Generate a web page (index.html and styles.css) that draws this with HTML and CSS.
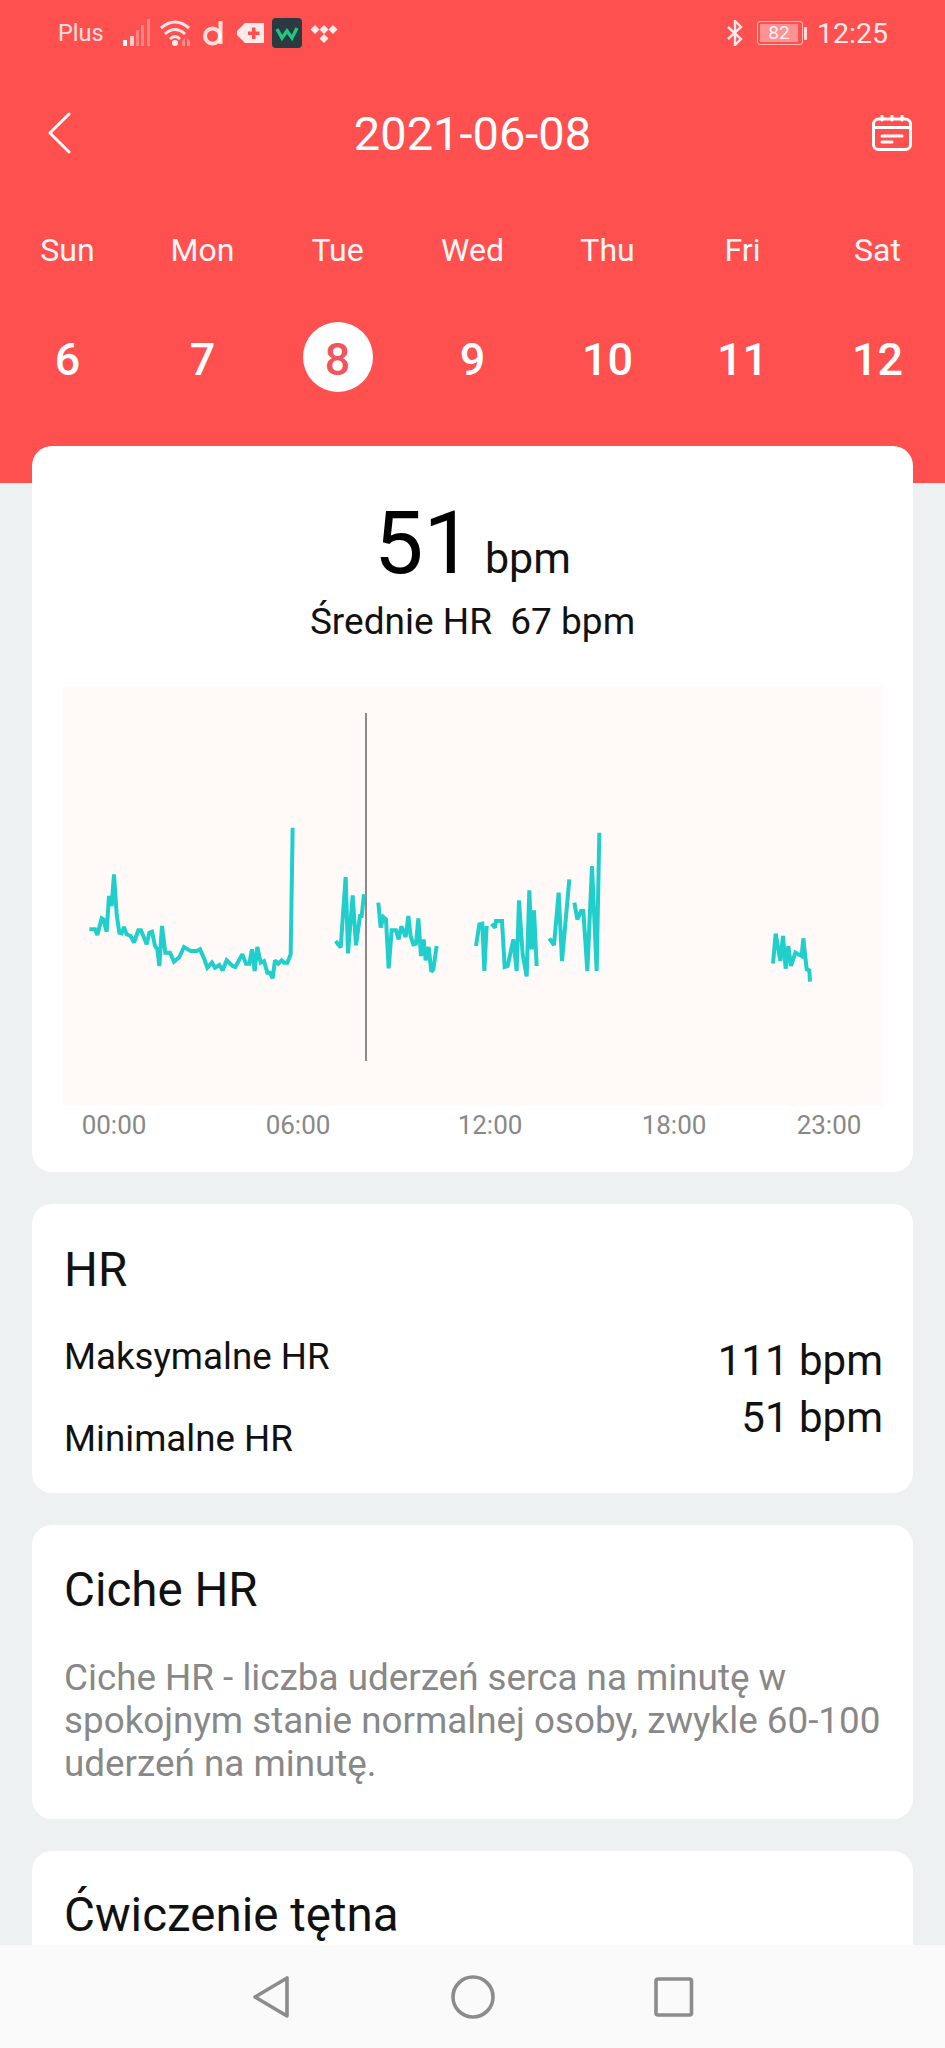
FILE: index.html
```html
<!DOCTYPE html>
<html lang="pl">
<head>
<meta charset="utf-8">
<title>HR</title>
<link rel="stylesheet" href="styles.css">
</head>
<body>
<div class="screen">
  <header class="hero">
    <div class="status">
      <div class="status-left">
        <span class="carrier">Plus</span>
        <svg class="ic-signal" viewBox="0 0 28 28"><g fill="#fff"><rect x="0" y="21" width="4" height="6"/><g opacity=".7"><rect x="7" y="17" width="4" height="10"/></g><g opacity=".3"><rect x="13" y="11" width="3" height="16"/><rect x="18" y="6" width="3" height="21"/><rect x="24" y="0" width="3" height="27"/></g></g></svg>
        <svg class="ic-wifi" viewBox="0 0 32 28"><g fill="none" stroke="#fff" stroke-width="3" opacity=".85"><path d="M1 9Q15-3 29 9"/><path d="M5 15Q15 6 25 15"/><path d="M10 20Q15 15 20 20"/></g><circle cx="15" cy="24" r="3" fill="#fff" opacity=".9"/><path d="M22 27v-5l3-3v8zM27 27v-8l3 3v5z" fill="#fff" opacity=".35"/></svg>
        <svg class="ic-d" viewBox="0 0 20 26"><circle cx="9.500" cy="16" r="7.500" fill="none" stroke="#fff" stroke-opacity=".8" stroke-width="4"/><path d="M17.500 1v23" stroke="#fff" stroke-opacity=".8" stroke-width="4"/></svg>
        <svg class="ic-tag" viewBox="0 0 27 20"><path d="M8 0h19v20H8L0 12V8z" fill="#fff" fill-opacity=".88"/><path d="M11 8.500h4v-4h3.500v4h4V12h-4v4H15v-4h-4z" fill="#ff5050"/></svg>
        <svg class="ic-w" viewBox="0 0 30 30"><rect width="30" height="30" rx="4" fill="#2b3a40"/><path d="M5 11l5 9 5-7 5 7 5-10" fill="none" stroke="#1fc77e" stroke-width="3.400"/></svg>
        <svg class="ic-tidal" viewBox="0 0 28 20"><g fill="#fff" fill-opacity=".88"><path d="M5 2l4.500 4.500L5 11 .5 6.500z"/><path d="M14 2l4.500 4.500L14 11 9.500 6.500z"/><path d="M23 2l4.500 4.500L23 11l-4.500-4.500z"/><path d="M14 11l4.500 4.500L14 20l-4.500-4.500z"/></g></svg>
      </div>
      <div class="status-right">
        <svg class="ic-bt" viewBox="0 0 18 26"><path d="M2 7l13 12-6 6V1l6 6L2 19" fill="none" stroke="#fff" stroke-opacity=".88" stroke-width="2.400"/></svg>
        <div class="battery"><div class="battery-body"><span class="battery-fill">82</span></div><div class="battery-tip"></div></div>
        <span class="clock">12:25</span>
      </div>
    </div>
    <div class="titlebar">
      <svg class="ic-back" viewBox="0 0 26 44"><path d="M23 2L3 22l20 20" fill="none" stroke="#fff" stroke-width="3" stroke-linecap="round" stroke-linejoin="round"/></svg>
      <h1 class="date">2021-06-08</h1>
      <svg class="ic-cal" viewBox="0 0 40 36"><g fill="none" stroke="#fff" stroke-width="3" stroke-linecap="round"><rect x="1.500" y="4" width="37" height="30.500" rx="5"/><path d="M2 12.500h36M10 1v4M20 1v4M30 1v4M10 21h20M10 27h10"/></g></svg>
    </div>
    <div class="week">
      <span class="wd">Sun</span><span class="wd">Mon</span><span class="wd">Tue</span><span class="wd">Wed</span><span class="wd">Thu</span><span class="wd">Fri</span><span class="wd">Sat</span>
    </div>
    <div class="week days">
      <span class="day">6</span><span class="day">7</span><span class="day"><span class="day-on">8</span></span><span class="day">9</span><span class="day">10</span><span class="day">11</span><span class="day">12</span>
    </div>
  </header>

  <main class="cards">
    <section class="card card-chart">
      <div class="big"><span class="big-num">51</span><span class="big-unit">bpm</span></div>
      <div class="avg">Średnie HR&nbsp;&nbsp;67 bpm</div>
      <div class="plot">
        <svg class="plot-svg" viewBox="63 685 819 420">
          <path class="cursor" d="M366 712V1060"/>
          <g class="trace" transform="translate(60 700) scale(.33333)">
            <path d="M88 685L105 685 112 702 125 652 130 655 140 692 147 585 155 615 162 520 170 640 178 695 185 697 192 678 200 700 212 705 222 725 235 688 243 688 260 730 268 695 276 692 285 735 292 745 298 795 306 675 316 755 330 755 342 782 358 768 372 738 392 750 410 750 420 745 432 772 442 800 456 785 465 800 478 792 488 808 500 778 518 795 526 798 547 760 558 788 568 788 576 745 584 810 592 738 602 785 612 780 622 815 630 815 638 832 645 778 655 788 665 778 672 785 682 785 692 760 698 380"/>
            <path d="M827 720L842 740 857 528 864 757 878 583 888 733 900 645 905 645 912 580"/>
            <path d="M955 605L962 680 970 648 978 655 986 802 995 688 1008 688 1016 715 1024 676 1037 708 1045 645 1052 705 1060 730 1068 728 1075 652 1083 765 1091 715 1097 778 1106 738 1114 812 1120 805 1130 735"/>
          </g>
          <g class="trace" transform="translate(440 700) scale(.33333)">
            <path d="M108 735L118 670 127 668 133 810 140 675"/>
            <path d="M155 668L165 680 168 660 186 660 194 798 203 795 220 715 230 810 237 598 248 760 260 826 268 568 275 745 282 628 290 795"/>
            <path d="M328 712L342 732 356 575 366 780 388 535"/>
            <path d="M403 605L412 655 423 630 430 630 442 810 456 495 470 810 478 395"/>
            <path d="M999 788L1007 698 1021 780 1029 705 1037 803 1045 735 1053 795 1066 755 1085 765 1090 712 1100 805 1108 808 1110 842"/>
          </g>
        </svg>
      </div>
      <div class="axis"><span>00:00</span><span>06:00</span><span>12:00</span><span>18:00</span><span>23:00</span></div>
    </section>

    <section class="card card-hr">
      <h2 class="card-title">HR</h2>
      <div class="hr-rows">
        <div class="hr-labels"><span>Maksymalne HR</span><span>Minimalne HR</span></div>
        <div class="hr-values"><span>111 bpm</span><span>51 bpm</span></div>
      </div>
    </section>

    <section class="card card-rest">
      <h2 class="card-title">Ciche HR</h2>
      <p class="desc">Ciche HR - liczba uderzeń serca na minutę w spokojnym stanie normalnej osoby, zwykle 60-100 uderzeń na minutę.</p>
    </section>

    <section class="card card-ex">
      <h2 class="card-title">Ćwiczenie tętna</h2>
    </section>
  </main>

  <nav class="navbar">
    <svg class="nav-ic" viewBox="0 0 44 44"><path d="M35 3v38L3 22z" fill="none" stroke="#8c8c8c" stroke-width="3.600" stroke-linejoin="round"/></svg>
    <svg class="nav-ic" viewBox="0 0 44 44"><circle cx="22" cy="22" r="20" fill="none" stroke="#8c8c8c" stroke-width="3.600"/></svg>
    <svg class="nav-ic" viewBox="0 0 44 44"><rect x="6" y="4" width="35.500" height="36" rx="2" fill="none" stroke="#8c8c8c" stroke-width="3.600"/></svg>
  </nav>
</div>
</body>
</html>
```

FILE: styles.css
```css
* { box-sizing: border-box; }
html, body { margin: 0; padding: 0; }
body { font-family: Roboto, "Noto Sans", sans-serif; color: #111; background: #eef1f2; }
.screen { position: relative; width: 945px; height: 2048px; overflow: hidden; background: #eef1f2; }

.hero { height: 483px; background: #ff5050; color: #fff; }

.status { height: 66px; padding: 0 57px 0 58px; display: flex; justify-content: space-between; align-items: center; }
.status-left, .status-right { display: flex; align-items: center; }
.carrier { font-size: 23.500px; opacity: .82; margin-right: 19px; }
.ic-signal { width: 28px; height: 28px; margin-right: 9px; }
.ic-wifi { width: 32px; height: 28px; margin-right: 11px; }
.ic-d { width: 20px; height: 26px; margin-right: 14px; }
.ic-tag { width: 27px; height: 20px; margin-right: 8px; }
.ic-w { width: 30px; height: 30px; margin-right: 8px; }
.ic-tidal { width: 28px; height: 20px; }
.ic-bt { width: 18px; height: 26px; margin-right: 13px; }
.battery { display: flex; align-items: center; margin-right: 10px; }
.battery-body { width: 46px; height: 24px; border: 1px solid rgba(255,255,255,.6); border-radius: 3px; padding: 2px; display: flex; }
.battery-fill { width: 38px; background: rgba(255,255,255,.38); border-radius: 1px; font-size: 19px; line-height: 18px; text-align: center; color: rgba(255,255,255,.9); }
.battery-tip { width: 3px; height: 13px; margin-left: 1px; background: rgba(255,255,255,.8); border-radius: 1px; }
.clock { font-size: 28.500px; opacity: .88; }

.titlebar { height: 134px; padding: 0 33px; display: grid; grid-template-columns: 1fr auto 1fr; align-items: center; }
.ic-back { width: 25px; height: 42px; margin-left: 14px; justify-self: start; }
.date { margin: 0; font-size: 47px; font-weight: 400; }
.ic-cal { width: 40px; height: 36px; justify-self: end; }

.week { display: grid; grid-template-columns: repeat(7, 135px); justify-items: center; }
.wd { font-size: 32px; margin-top: 30px; line-height: 40px; opacity: .95; }
.days { margin-top: 51px; }
.day { height: 72px; padding-top: 4px; display: flex; align-items: center; justify-content: center; font-size: 45px; font-weight: 500; }
.day-on { width: 70px; height: 70px; margin-top: -4px; padding-top: 4px; border-radius: 50%; background: #fff; color: #f2545b; display: flex; align-items: center; justify-content: center; }

.cards { margin-top: -37px; padding: 0 32px; display: flex; flex-direction: column; gap: 32px; }
.card { background: #fff; border-radius: 20px; }

.card-chart { height: 726px; padding: 40px 31px 0; }
.big { display: flex; justify-content: center; align-items: baseline; height: 100px; line-height: 114px; }
.big-num { font-size: 88px; color: #000; margin-right: 12px; }
.big-unit { font-size: 43px; color: #111; }
.avg { text-align: center; font-size: 37px; line-height: 40px; color: #111; margin-top: 16px; }
.plot { margin-top: 44px; height: 420px; background: #fff9f7; }
.plot-svg { display: block; width: 819px; height: 420px; }
.cursor { stroke: #8a8a8a; stroke-width: 2; fill: none; }
.trace path { fill: none; stroke: #20cfcb; stroke-width: 12; stroke-linejoin: miter; stroke-miterlimit: 2; }
.axis { display: grid; grid-template-columns: 102px 266px 118px 250px 60px; margin-top: 3px; text-align: center; font-size: 26px; line-height: 32px; color: #888; white-space: nowrap; justify-items: center; }

.card-title { margin: 0; font-size: 47.500px; font-weight: 400; line-height: 56px; color: #111; }
.card-hr { height: 289px; padding: 38px 30px 0 32px; }
.hr-rows { display: flex; justify-content: space-between; }
.hr-labels, .hr-values { display: flex; flex-direction: column; }
.hr-labels { font-size: 36.700px; line-height: 42px; gap: 40px; margin-top: 38px; }
.hr-values { font-size: 42px; line-height: 47px; gap: 10px; align-items: flex-end; margin-top: 39px; }
.card-rest { height: 294px; padding: 37px 32px 0; }
.desc { margin: 38px 0 0; font-size: 36.800px; line-height: 43px; color: #888; }
.card-ex { height: 260px; padding: 36px 32px 0; }

.navbar { position: absolute; left: 0; right: 0; bottom: 0; height: 103px; background: #fafafa; display: flex; justify-content: center; align-items: center; gap: 155px; }
.nav-ic { width: 44px; height: 44px; }
```
